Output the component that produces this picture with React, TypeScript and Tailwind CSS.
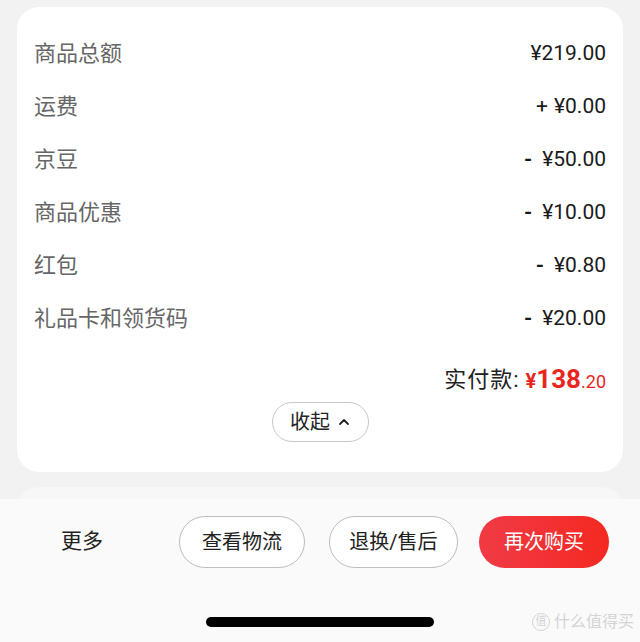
import React from "react";

const rows = [
  { label: "商品总额", sign: "", value: "¥219.00" },
  { label: "运费", sign: "+", value: "¥0.00" },
  { label: "京豆", sign: "-", value: "¥50.00" },
  { label: "商品优惠", sign: "-", value: "¥10.00" },
  { label: "红包", sign: "-", value: "¥0.80" },
  { label: "礼品卡和领货码", sign: "-", value: "¥20.00" },
];

export default function App() {
  return (
    <div
      className="relative w-[640px] h-[642px] overflow-hidden bg-[#f2f2f2]"
      style={{ fontFamily: "Roboto, 'Noto Sans CJK SC', sans-serif" }}
    >
      <div className="pt-[7px] px-[17px]">
        <div className="bg-white rounded-[22px] pt-[20px] pb-[30px] px-[17px]">
          {rows.map((r) => (
            <div key={r.label} className="flex h-[53px] items-center justify-between">
              <span className="text-[22px] text-[#666666]">{r.label}</span>
              <span className="flex items-center text-[21px] text-[#1a1a1a]">
                {r.sign && (
                  <span className={r.sign === "-" ? "mr-[10px] font-bold" : "mr-[6px]"}>{r.sign}</span>
                )}
                {r.value}
              </span>
            </div>
          ))}
          <div className="flex h-[40px] mt-[14px] items-center justify-end">
            <span className="text-[22px] text-[#222222] tracking-[1px]">实付款:</span>
            <span className="ml-[6px] text-[#e8261e] font-bold text-[20px] mt-[3px]">¥</span>
            <span className="text-[#e8261e] font-bold text-[26px]">138</span>
            <span className="text-[#e8261e] text-[18px] mt-[5px]">.20</span>
          </div>
          <div className="flex justify-center mt-[3px]">
            <button className="h-[40px] w-[97px] rounded-full border border-[#c8c8c8] flex items-center justify-center gap-[8px] text-[20px] text-[#222222]">
              收起
              <svg width="12" height="8" viewBox="0 0 12 8" fill="none">
                <path d="M2 6l4-4 4 4" stroke="#222" strokeWidth="1.8" strokeLinecap="round" strokeLinejoin="round" />
              </svg>
            </button>
          </div>
        </div>
        <div className="bg-[#f7f7f7] rounded-t-[22px] h-[30px] mt-[15px]" />
      </div>

      <div className="absolute left-0 right-0 top-[499px] bottom-0 bg-[#fafafa]">
        <div className="flex items-center h-[52px] mt-[17px] pl-[61px] pr-[31px]">
          <span className="text-[21px] text-[#222222]">更多</span>
          <div className="ml-auto flex gap-[24px]">
            <button className="h-[52px] w-[126px] rounded-full border border-[#bdbdbd] bg-white text-[20px] text-[#222222]">
              查看物流
            </button>
            <button className="h-[52px] w-[129px] rounded-full border border-[#bdbdbd] bg-white text-[20px] text-[#222222]">
              退换/售后
            </button>
            <button className="h-[52px] w-[130px] -ml-[3px] rounded-full bg-gradient-to-r from-[#f03a44] to-[#f5281f] text-[20px] text-white">
              再次购买
            </button>
          </div>
        </div>
        <div className="flex justify-center mt-[49px]">
          <div className="w-[228px] h-[10px] rounded-full bg-black" />
        </div>
        <div className="absolute right-[6px] bottom-[8px] flex items-center gap-[4px] text-[#d4d4d4] text-[16px]">
          <span className="w-[18px] h-[18px] rounded-full border border-[#d4d4d4] flex items-center justify-center text-[11px]">值</span>
          <span>什么值得买</span>
        </div>
      </div>
    </div>
  );
}
